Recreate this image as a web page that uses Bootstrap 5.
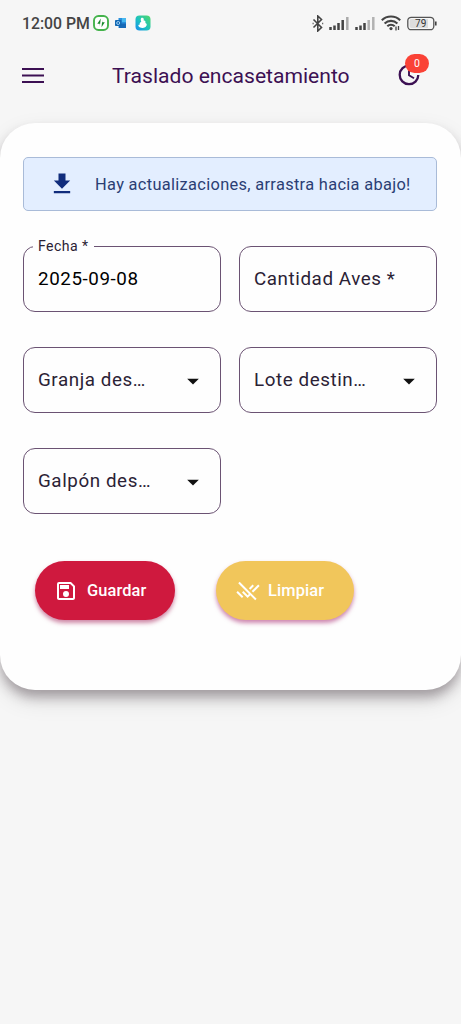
<!DOCTYPE html>
<html lang="es">
<head>
<meta charset="utf-8">
<meta name="viewport" content="width=device-width, initial-scale=1">
<title>Traslado encasetamiento</title>
<link href="https://cdn.jsdelivr.net/npm/bootstrap@5.3.0/dist/css/bootstrap.min.css" rel="stylesheet">
<style>
body{background:#f6f6f6;font-family:Roboto,sans-serif;height:1024px;overflow:hidden;color:#2a2233}
svg{display:block;flex:none}
.statusbar{height:46px;padding:0 24px 0 22px;color:#444}
.clock{font-size:15.8px;font-weight:500;letter-spacing:0;line-height:20px;width:71px;padding-top:1px;white-space:nowrap}
.gap-app{margin-left:6px}
.gap-sig{margin-left:5px}
.appbar{height:58px;padding:0 37px 0 22px;color:#3c1053}
.appbar h1{font-size:21.1px;font-weight:400;line-height:28px;margin:0 0 0 68px;padding-top:1px;color:#3c1053;white-space:nowrap}
.hist{width:28px;height:28px}
.count{position:absolute;left:9px;top:-7px;width:24px;height:19px;border-radius:10px;background:#fa4236;color:#fff;font-size:10.5px;font-weight:400;line-height:20px;padding:0}
.sheet{margin-top:19px;height:567px;border-radius:35px;background:#fefefe;padding:34px 24px 0 23px;box-shadow:0 8px 12px -1px rgba(60,45,55,.38),0 10px 24px rgba(0,0,0,.11)}
.notice{height:54px;border:1px solid #a9bbd8;border-radius:5px;background:#e3eeff;color:#2b3e74;padding:0 0 0 24px;margin:0 0 35px;font-size:16.4px;letter-spacing:.32px;white-space:nowrap}
.notice span{margin-left:19px;padding-top:2px}
.fields{display:grid;grid-template-columns:198px 198px;column-gap:18px;row-gap:35px}
.fieldbox{height:66px;border:1.2px solid #6b5373;border-radius:12px;padding:1px 13px 0 14px;font-size:18.8px;letter-spacing:.58px;white-space:nowrap;color:#2b2235}
.lbl{position:absolute;left:9px;top:-11px;background:#fefefe;padding:0 5px;font-size:14.1px;line-height:20px;letter-spacing:.44px;color:#2b2235}
.pill{height:59px;border:0;border-radius:30px;color:#fff!important;font-size:16.4px;font-weight:500;letter-spacing:.12px;padding:0 0 0 19px}
.pill span{padding-top:1px}
.pill-save{width:140px;gap:9px;background:#cf193e!important;box-shadow:0 3px 4px rgba(160,20,80,.5)}
.pill-clear{width:138px;gap:8px;padding-left:20px;background:#f1c65b!important;box-shadow:0 3px 4px rgba(160,20,100,.5)}
.actions{margin:47px 0 0 12px;gap:41px}
</style>
</head>
<body>
<div class="statusbar d-flex align-items-center">
  <span class="clock">12:00 PM</span>
  <svg width="16" height="16" viewBox="0 0 16 16"><rect x="1" y="1" width="14" height="14" rx="4.5" fill="#fff" stroke="#45b34c" stroke-width="1.9"/><path d="M7.8 3.6 4.3 8.8h2.5v2.5zM8.5 12.3l3.3-5H9.3V4.8z" fill="#168a29"/></svg>
  <svg class="gap-app" width="12" height="12" viewBox="0 0 12 12"><path d="M3.5 1H11v10H3.5z" fill="#288fdc"/><path d="M7 1h4v4H7z" fill="#47b8ef"/><path d="M4 6.5h7V11H4z" fill="#1769b7"/><rect y="3" width="6.5" height="6" rx=".8" fill="#1268b3"/><circle cx="3.2" cy="6" r="1.5" fill="none" stroke="#9fd0f5"/></svg>
  <svg style="margin-left:8px" width="16" height="16" viewBox="0 0 16 16"><defs><linearGradient id="g" x1="1" y1="0" x2="0" y2="1"><stop stop-color="#51d967"/><stop offset=".55" stop-color="#1cc2c0"/><stop offset="1" stop-color="#168bf0"/></linearGradient></defs><rect x=".5" y=".5" width="15" height="15" rx="4" fill="url(#g)"/><path d="M6.5 2.8c2-.7 2.7 1 2.1 2.8 2-.2 2.2 1.5 1.7 2.4 2.1.4 1.8 3-.2 4.2-2 1.2-5.2.9-6.5-.9-.7-1 .2-2 1.4-1.6-.8-1.4 0-2.5 1.3-2.7-.7-1.4-.8-3.5.2-4.2z" fill="#fff"/></svg>
  <svg class="ms-auto" width="12" height="17" viewBox="0 0 12 17"><path d="m1.5 4.5 8 8L5.8 16V1l3.7 3.5-8 8" fill="none" stroke="#444" stroke-width="1.6"/><path d="M.6 8.5h1M10.2 8.5h1" stroke="#444" stroke-width="1.7"/></svg>
  <svg class="gap-sig" width="21" height="14" viewBox="0 0 21 14"><path d="M1.5 14v-3M5.5 14V9.5M9.5 14V7M13.7 14V4" stroke="#444" stroke-width="2.5"/><path d="M18.3 14V1" stroke="#aaa" stroke-width="2.5"/></svg>
  <svg class="gap-sig" width="21" height="14" viewBox="0 0 21 14"><path d="M1.5 14v-3M5.5 14V9.5M9.5 14V7" stroke="#444" stroke-width="2.5"/><path d="M13.7 14V4M18.3 14V1" stroke="#b2b2b2" stroke-width="2.5"/></svg>
  <svg class="gap-sig" width="20" height="16" viewBox="0 0 20 16"><g fill="none" stroke="#444" stroke-width="2.1"><path d="M.8 5.2c5-4.9 13.4-4.9 18.4 0M3.6 8.4c3.7-3.4 9.1-3.4 12.8 0M6.3 11.3c2-1.9 5.3-1.9 7.4 0"/></g><circle cx="10" cy="13.6" r="1.6" fill="#444"/><path d="M15 11.5v4M17.5 11v4" stroke="#444" stroke-width="1.3"/></svg>
  <svg style="margin-left:6px" width="30" height="15" viewBox="0 0 30 15"><rect x=".8" y="1.3" width="26" height="12.4" rx="3.5" fill="#f6f6f6" stroke="#555" stroke-width="1.3"/><path d="M4.5 3H21v9H4.5A2 2 0 0 1 2.5 10V5a2 2 0 0 1 2-2z" fill="#ddd"/><path d="M28.8 5.5v4" stroke="#444" stroke-width="1.6"/><text x="13.7" y="11.2" text-anchor="middle" font-family="Roboto,sans-serif" font-size="10" font-weight="400" fill="#333">79</text></svg>
</div>
<header class="appbar d-flex align-items-center">
  <svg width="22" height="16" viewBox="0 0 22 16"><path d="M0 2h22M0 8.5h22M0 15h22" stroke="#3c1053" stroke-width="2"/></svg>
  <h1>Traslado encasetamiento</h1>
  <div class="hist position-relative ms-auto">
    <svg width="28" height="28" viewBox="0 0 28 28"><path d="M13.2 4.6A9.3 9.3 0 1 0 22.3 14" fill="none" stroke="#3c1053" stroke-width="2.3"/><path d="M13 8v6.3l5 3" fill="none" stroke="#3c1053" stroke-width="1.9"/></svg>
    <span class="count badge">0</span>
  </div>
</header>
<main class="sheet">
  <div class="notice d-flex align-items-center">
    <svg width="28" height="28" viewBox="0 0 24 24" fill="#102c7c"><path d="M5 20h14v-2H5v2zM19 9h-4V3H9v6H5l7 7 7-7z"/></svg>
    <span>Hay actualizaciones, arrastra hacia abajo!</span>
  </div>
  <div class="fields">
    <div class="fieldbox position-relative d-flex align-items-center text-black"><span class="lbl">Fecha *</span>2025-09-08</div>
    <div class="fieldbox d-flex align-items-center">Cantidad Aves *</div>
    <div class="fieldbox d-flex align-items-center justify-content-between">Granja des…<svg width="28" height="28" viewBox="0 0 24 24" fill="#111"><path d="m7 10 5 5 5-5z"/></svg></div>
    <div class="fieldbox d-flex align-items-center justify-content-between">Lote destin…<svg width="28" height="28" viewBox="0 0 24 24" fill="#111"><path d="m7 10 5 5 5-5z"/></svg></div>
    <div class="fieldbox d-flex align-items-center justify-content-between">Galpón des…<svg width="28" height="28" viewBox="0 0 24 24" fill="#111"><path d="m7 10 5 5 5-5z"/></svg></div>
  </div>
  <div class="actions d-flex">
    <button class="btn pill pill-save d-flex align-items-center" type="button">
      <svg width="24" height="24" viewBox="0 0 24 24" fill="#fff"><path d="M17 3H5a2 2 0 0 0-2 2v14c0 1.1.89 2 2 2h14c1.1 0 2-.9 2-2V7zm2 16H5V5h11.17L19 7.83zM12 12a3 3 0 1 0 0 6 3 3 0 0 0 0-6zM6 6h9v4H6z"/></svg>
      <span>Guardar</span>
    </button>
    <button class="btn pill pill-clear d-flex align-items-center" type="button">
      <svg width="24" height="24" viewBox="0 0 24 24" fill="#fff"><path d="M1.79 12l5.58 5.59L5.96 19 .37 13.41zM2.24 4.22 12.9 14.89l-1.28 1.28L7.44 12l-1.41 1.41L11.62 19l2.69-2.69 4.89 4.89 1.41-1.41L3.65 2.81zM17.14 13.49 23.62 7 22.2 5.59l-6.48 6.48zM17.96 7l-1.41-1.41-3.65 3.66 1.41 1.41z"/></svg>
      <span>Limpiar</span>
    </button>
  </div>
</main>
<script src="https://cdn.jsdelivr.net/npm/bootstrap@5.3.0/dist/js/bootstrap.bundle.min.js"></script>
</body>
</html>
